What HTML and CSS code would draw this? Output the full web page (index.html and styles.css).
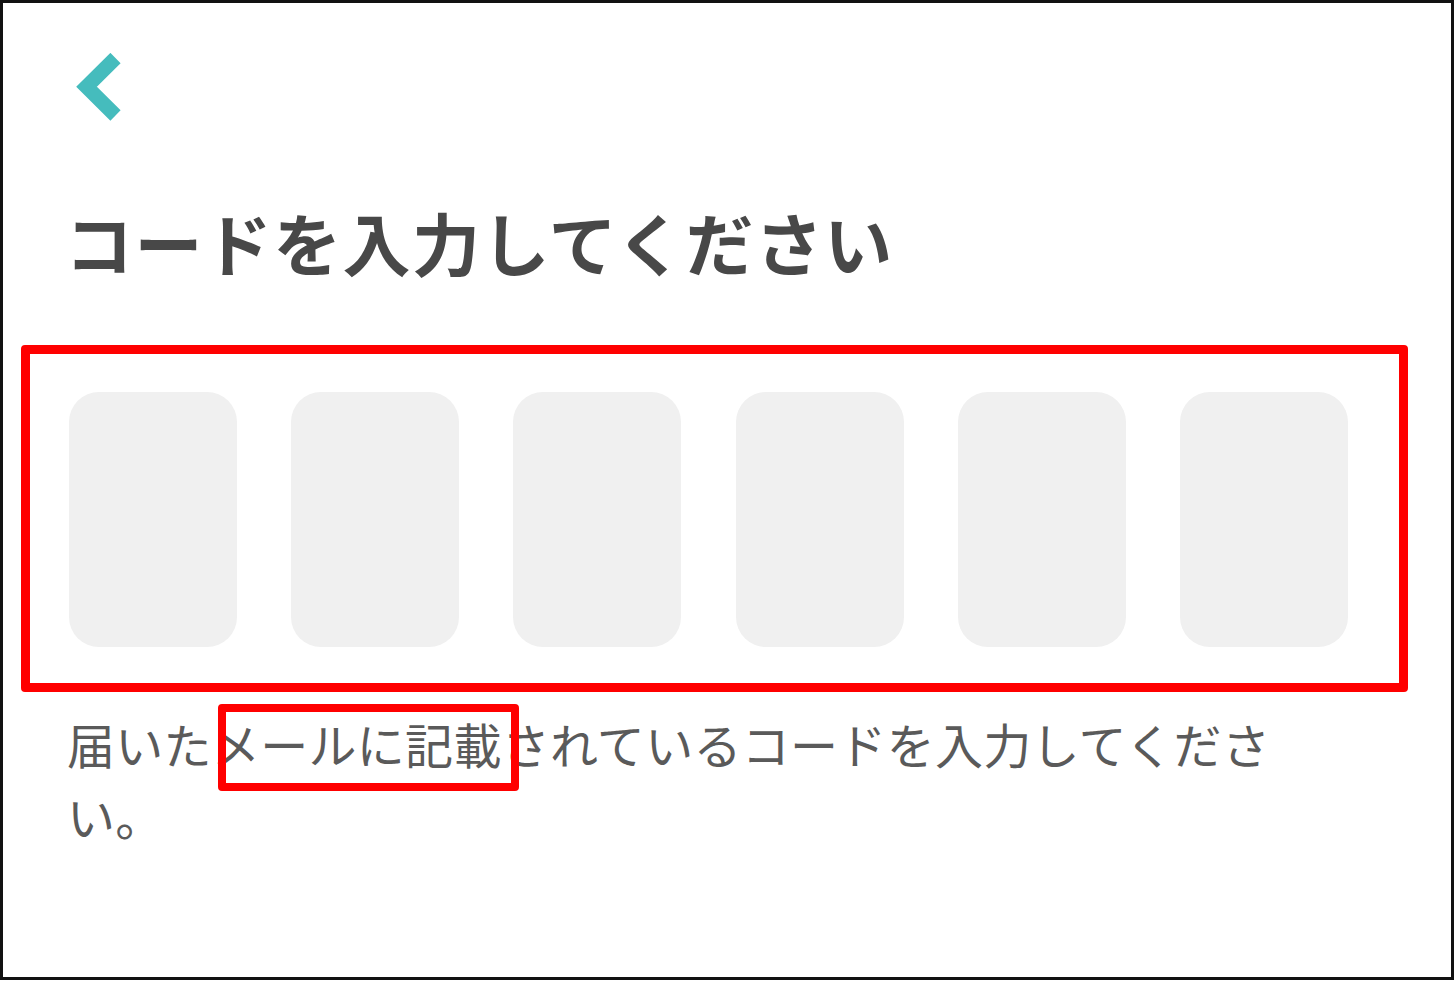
FILE: index.html
```html
<!DOCTYPE html>
<html lang="ja">
<head>
<meta charset="utf-8">
<title>コードを入力してください</title>
<link rel="stylesheet" href="styles.css">
</head>
<body>
<div class="frame">
  <div class="content">
    <button class="back" aria-label="戻る">
      <svg class="back-icon" width="48" height="68" viewBox="0 0 48 68">
        <polyline points="39.5,5 10.5,33.75 39.5,62.5" fill="none" stroke="#45bcbd" stroke-width="14.5" stroke-linecap="butt" stroke-linejoin="miter"/>
      </svg>
    </button>
    <h1 class="title">コードを入力してください</h1>
    <div class="code-row">
      <div class="code-cell"></div>
      <div class="code-cell"></div>
      <div class="code-cell"></div>
      <div class="code-cell"></div>
      <div class="code-cell"></div>
      <div class="code-cell"></div>
    </div>
    <p class="note">届いたメールに記載されているコードを入力してください。</p>
  </div>
  <div class="mark mark-cells"></div>
  <div class="mark mark-word"></div>
</div>
</body>
</html>
```
FILE: styles.css
```css
html, body {
  margin: 0;
  padding: 0;
  background: #ffffff;
}

body {
  font-family: "Noto Sans CJK JP", "Noto Sans", sans-serif;
}

.frame {
  position: relative;
  box-sizing: border-box;
  width: 1454px;
  height: 980px;
  border: 3px solid #111111;
  background: #ffffff;
  overflow: hidden;
}

.content {
  display: flex;
  flex-direction: column;
  align-items: flex-start;
  padding-left: 66px;
  width: 1279px;
}

.back {
  margin: 50px 0 0 7px;
  padding: 0;
  border: 0;
  background: none;
  display: block;
  line-height: 0;
}

.back-icon {
  display: block;
}

.title {
  margin: 80px 0 0 -4px;
  font-size: 68px;
  line-height: 82px;
  font-weight: 700;
  color: #484848;
  letter-spacing: 1.4px;
}

.code-row {
  margin-top: 109px;
  width: 1279px;
  display: flex;
  justify-content: space-between;
}

.code-cell {
  width: 168px;
  height: 255px;
  border-radius: 30px;
  background: #f0f0f0;
}

.note {
  margin: 60px 0 0 -2px;
  width: 1281px;
  font-size: 48px;
  line-height: 72px;
  font-weight: 400;
  color: #5a5a5a;
  letter-spacing: 0.3px;
}

.mark {
  position: absolute;
  box-sizing: border-box;
  border: 9px solid #ff0000;
  border-radius: 4px;
}

.mark-cells {
  left: 18px;
  top: 342px;
  width: 1387px;
  height: 347px;
}

.mark-word {
  left: 215px;
  top: 701px;
  width: 301px;
  height: 87px;
  border-width: 8px;
}
```
